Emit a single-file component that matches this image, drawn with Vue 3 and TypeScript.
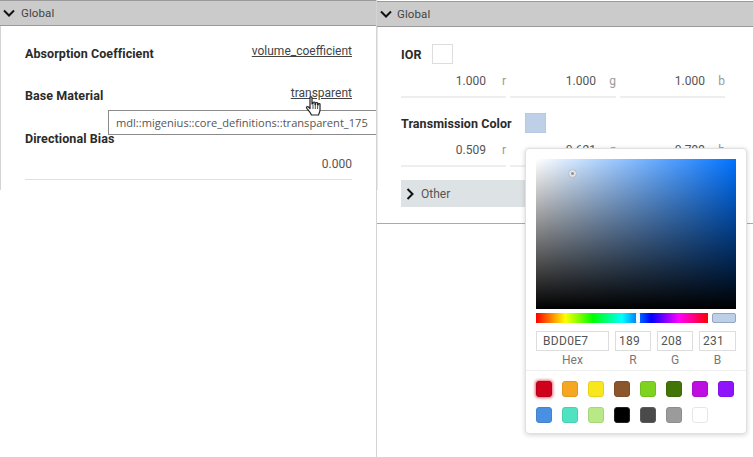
<script setup lang="ts">
interface Channel { value: string; unit: string }
const ior: Channel[] = [
  { value: '1.000', unit: 'r' },
  { value: '1.000', unit: 'g' },
  { value: '1.000', unit: 'b' },
]
const transmission: Channel[] = [
  { value: '0.509', unit: 'r' },
  { value: '0.621', unit: 'g' },
  { value: '0.799', unit: 'b' },
]
const swatches: { color: string; border: string }[] = [
  { color: '#d0021b', border: '#b8021b' },
  { color: '#f5a623', border: '#e0981f' },
  { color: '#f8e71c', border: '#e3d319' },
  { color: '#8b572a', border: '#7d4e26' },
  { color: '#7ed321', border: '#72c01e' },
  { color: '#417505', border: '#3b6a05' },
  { color: '#bd10e0', border: '#ac0fcc' },
  { color: '#9013fe', border: '#8311e7' },
  { color: '#4a90e2', border: '#4383ce' },
  { color: '#50e3c2', border: '#49cfb1' },
  { color: '#b8e986', border: '#a8d47a' },
  { color: '#000000', border: '#222222' },
  { color: '#4a4a4a', border: '#5a5a5a' },
  { color: '#9b9b9b', border: '#8d8d8d' },
  { color: '#ffffff', border: '#e6e6e6' },
]
</script>

<template>
  <div class="page">
    <section class="panel left">
      <header class="head">
        <svg class="chev" width="14" height="14" viewBox="0 0 14 14"><path d="M2 4.5 L7 9.5 L12 4.5" fill="none" stroke="#111" stroke-width="2" /></svg>
        <span>Global</span>
      </header>
      <div class="left-body">
        <div class="prop-row first">
          <span class="label">Absorption Coefficient</span>
          <a class="link">volume_coefficient</a>
        </div>
        <div class="prop-row second">
          <span class="label">Base Material</span>
          <a class="link">transparent</a>
        </div>
        <div class="prop-row third">
          <span class="label">Directional Bias</span>
        </div>
        <div class="single-value">0.000</div>
      </div>
      <div class="tooltip">mdl::migenius::core_definitions::transparent_175</div>
      <svg class="cursor" width="18" height="22" viewBox="0 0 18 22">
        <path d="M5 1.5 C5 0.6 7 0.6 7 1.5 L7 8 L8 8 L8 6.5 C8.5 5.8 9.7 5.8 10 6.5 L10 8.5 L10.6 8.5 L10.6 7 C11 6.3 12.3 6.3 12.6 7 L12.6 9 L13.2 9 L13.2 8 C13.6 7.4 14.8 7.4 15 8 L15 14 C15 16 14 17 13.5 19 L6.5 19 C5.5 16.5 3.5 14.5 1.5 12 C1 10.8 2.5 10 3.5 11 L5 12.5 Z" fill="#fff" stroke="#222" stroke-width="1.2" stroke-linejoin="round" />
        <path d="M8 9 V13 M10.3 9 V13 M12.6 9.5 V13" stroke="#222" stroke-width=".8" />
      </svg>
    </section>

    <section class="panel right">
      <header class="head">
        <svg class="chev" width="14" height="14" viewBox="0 0 14 14"><path d="M2 4.5 L7 9.5 L12 4.5" fill="none" stroke="#111" stroke-width="2" /></svg>
        <span>Global</span>
      </header>
      <div class="right-body">
        <div class="color-title">
          <span class="label">IOR</span>
          <span class="swatch white"></span>
        </div>
        <div class="channels">
          <div v-for="c in ior" :key="c.unit" class="channel">
            <span class="num">{{ c.value }}</span>
            <span class="unit">{{ c.unit }}</span>
          </div>
        </div>
        <div class="color-title second-title">
          <span class="label">Transmission Color</span>
          <span class="swatch blue"></span>
        </div>
        <div class="channels">
          <div v-for="c in transmission" :key="c.unit" class="channel">
            <span class="num">{{ c.value }}</span>
            <span class="unit">{{ c.unit }}</span>
          </div>
        </div>
        <div class="other">
          <svg class="chev-r" width="14" height="14" viewBox="0 0 14 14"><path d="M3.5 2 L8.5 7 L3.5 12" fill="none" stroke="#111" stroke-width="2" /></svg>
          <span>Other</span>
        </div>
      </div>

      <div class="picker">
        <div class="sat">
          <span class="sat-dot"></span>
        </div>
        <div class="sliders">
          <div class="hue"><span class="hue-thumb"></span></div>
          <div class="preview"></div>
        </div>
        <div class="fields">
          <div class="field hex"><div class="box">BDD0E7</div><span>Hex</span></div>
          <div class="field"><div class="box">189</div><span>R</span></div>
          <div class="field"><div class="box">208</div><span>G</span></div>
          <div class="field"><div class="box">231</div><span>B</span></div>
        </div>
        <div class="presets">
          <span
            v-for="(s, i) in swatches"
            :key="i"
            class="preset"
            :class="{ active: i === 0 }"
            :style="{ background: s.color, borderColor: s.border }"
          ></span>
        </div>
      </div>
    </section>
  </div>
</template>

<style>
html, body { margin: 0; background: #fff; }
</style>

<style scoped>
.page {
  display: flex;
  width: 753px;
  height: 457px;
  overflow: hidden;
  background: #fff;
  font-family: Roboto, "Liberation Sans", sans-serif;
  color: #333;
  font-size: 12.5px;
}
.panel { position: relative; box-sizing: border-box; }
.left { width: 377px; border-right: 1px solid #d4d4d4; }
.right { width: 376px; height: 224px; border-bottom: 1px solid #aaa; }
.head {
  box-sizing: border-box;
  height: 26px;
  display: flex;
  align-items: center;
  gap: 5px;
  padding-left: 2px;
  background: #cbcbcb;
  border-top: 1px solid #9a9a9a;
  border-bottom: 1px solid #9a9a9a;
  color: #444;
  font-size: 11.5px;
  letter-spacing: .1px;
}
.right .head { margin-top: 1px; gap: 4px; }
.left-body {
  box-sizing: border-box;
  height: 164px;
  border-left: 1px solid #d4d4d4;
  padding: 0 24px;
}
.prop-row { display: flex; justify-content: space-between; }
.prop-row.first { padding-top: 20px; }
.prop-row.second { padding-top: 27px; }
.prop-row.third { padding-top: 28px; }
.label { font-weight: 700; color: #2b2b2b; letter-spacing: .07px; white-space: nowrap; }
.link { color: #444; font-size: 12px; text-decoration: underline; position: relative; top: -2px; }
.single-value {
  text-align: right;
  margin-top: 11px;
  padding-bottom: 8px;
  border-bottom: 1px solid #dfdfdf;
  color: #555;
  font-size: 12px;
}
.tooltip {
  position: absolute;
  left: 108px;
  top: 110px;
  box-sizing: border-box;
  width: 268px;
  height: 25px;
  line-height: 23px;
  padding-left: 7px;
  background: #fff;
  border: 1px solid #8a8a8a;
  border-right: 0;
  font-family: "Open Sans", sans-serif;
  font-size: 11.1px;
  color: #555;
  white-space: nowrap;
}
.cursor { position: absolute; left: 305px; top: 96px; }
.right-body {
  box-sizing: border-box;
  height: 163px;
  border-left: 1px solid #e8e8e8;
  padding: 0 27px 0 23px;
}
.color-title { display: flex; align-items: center; gap: 10px; padding-top: 17px; }
.second-title { padding-top: 15px; gap: 13px; }
.swatch {
  box-sizing: border-box;
  width: 21px;
  height: 20px;
  border: 1px solid #ddd;
}
.swatch.white { background: #fff; }
.swatch.blue { background: #bdd0e7; border-color: #b6c9e0; }
.channels {
  display: grid;
  grid-template-columns: 105px 106px 105px;
  column-gap: 4px;
  margin-top: 8px;
}
.channel {
  box-sizing: border-box;
  height: 26px;
  padding-bottom: 6px;
  display: flex;
  align-items: center;
  justify-content: flex-end;
  border-bottom: 2px solid #eee;
  color: #555;
  font-size: 12px;
}
.unit { width: 20px; text-align: right; color: #999; }
.other {
  box-sizing: border-box;
  height: 27px;
  margin-top: 13px;
  background: #dde3e5;
  display: flex;
  align-items: center;
  gap: 3px;
  padding-left: 3px;
  color: #555;
  font-size: 12px;
  width: 325px;
}
.picker {
  position: absolute;
  left: 148px;
  top: 148px;
  box-sizing: border-box;
  width: 222px;
  height: 286px;
  padding: 10px;
  background: #fff;
  border: 1px solid #e0e0e0;
  border-radius: 4px;
  box-shadow: 0 1px 5px rgba(0,0,0,.18);
}
.sat {
  position: relative;
  width: 200px;
  height: 150px;
  background:
    linear-gradient(to top, #000, rgba(0,0,0,0)),
    linear-gradient(to right, #fff, #0072ff);
}
.sat-dot {
  position: absolute;
  left: 33px;
  top: 11px;
  box-sizing: border-box;
  width: 7px;
  height: 7px;
  border-radius: 50%;
  background: #8a93a0;
  border: 2px solid #e4e4e4;
  box-shadow: 0 0 1px #777;
}
.sliders { display: flex; gap: 4px; margin-top: 4px; }
.hue {
  position: relative;
  width: 172px;
  height: 10px;
  background: linear-gradient(to right, #f00 0%, #ff0 17%, #0f0 33%, #0ff 50%, #00f 67%, #f0f 83%, #f00 100%);
}
.hue-thumb {
  position: absolute;
  left: 100px;
  top: 0;
  width: 4px;
  height: 10px;
  background: #f4f8ff;
  border-radius: 1px;
}
.preview {
  box-sizing: border-box;
  width: 24px;
  height: 10px;
  background: #bdd0e7;
  border: 1px solid #94a7bf;
  border-radius: 2px;
}
.fields {
  display: grid;
  grid-template-columns: 73px 36px 36px 37px;
  column-gap: 6px;
  margin-top: 8px;
}
.field { display: flex; flex-direction: column; align-items: center; font-size: 12px; color: #777; }
.field span { margin-top: 1px; line-height: 16px; }
.box {
  box-sizing: border-box;
  width: 100%;
  height: 20px;
  border: 1px solid #ddd;
  padding-left: 3px;
  line-height: 18px;
  color: #555;
  letter-spacing: .3px;
}
.hex .box { padding-left: 6px; }
.presets {
  display: grid;
  grid-template-columns: repeat(8, 16px);
  gap: 10px;
  margin: 2px -10px 0;
  padding: 10px 10px 0;
  border-top: 1px solid #eee;
}
.preset {
  box-sizing: border-box;
  width: 16px;
  height: 16px;
  border: 1px solid;
  border-radius: 3px;
}
.preset.active { box-shadow: 0 0 3px 1px rgba(208,2,27,.6); }
</style>
